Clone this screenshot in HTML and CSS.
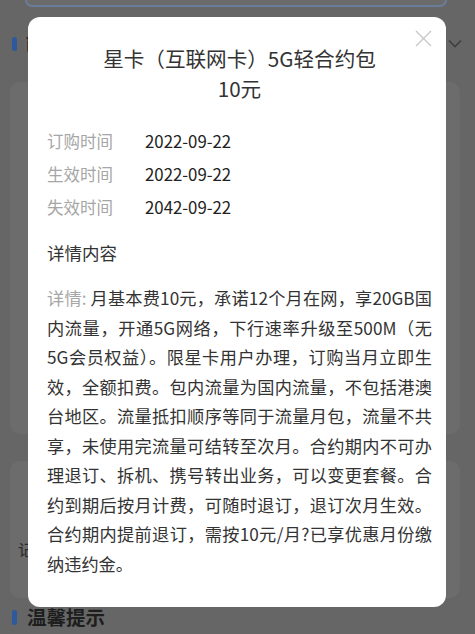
FILE: index.html
```html
<!DOCTYPE html>
<html lang="zh-CN">
<head>
<meta charset="utf-8">
<title>套餐详情</title>
<link rel="stylesheet" href="styles.css">
</head>
<body>
<div class="page">
  <div class="top-card"></div>
  <div class="sec-head">
    <span class="sec-bar"></span>
    <span class="sec-title">已订购套餐</span>
    <svg class="chev" width="14" height="9" viewBox="0 0 14 9"><path d="M1 1.5 L7 7.5 L13 1.5" fill="none" stroke="#3e3e3e" stroke-width="1.6"/></svg>
  </div>
  <div class="bg-card bg-card-a"></div>
  <div class="bg-card bg-card-b"><span class="bg-text">记录</span></div>
  <div class="sec-head sec-head-2">
    <span class="sec-bar"></span>
    <span class="sec-title-2">温馨提示</span>
  </div>
</div>

<div class="modal">
  <svg class="close" width="17" height="17" viewBox="0 0 17 17"><path d="M1 1 L16 16 M16 1 L1 16" stroke="#c8c8c8" stroke-width="1.4" fill="none"/></svg>
  <h2 class="title">星卡（互联网卡）5G轻合约包<br>10元</h2>
  <div class="info">
    <div class="row"><span class="lbl">订购时间</span><span class="val">2022-09-22</span></div>
    <div class="row"><span class="lbl">生效时间</span><span class="val">2022-09-22</span></div>
    <div class="row"><span class="lbl">失效时间</span><span class="val">2042-09-22</span></div>
  </div>
  <h3 class="sub">详情内容</h3>
  <p class="desc"><span class="desc-lbl">详情:</span> 月基本费10元，承诺12个月在网，享20GB国内流量，开通5G网络，下行速率升级至500M（无5G会员权益）。限星卡用户办理，订购当月立即生效，全额扣费。包内流量为国内流量，不包括港澳台地区。流量抵扣顺序等同于流量月包，流量不共享，未使用完流量可结转至次月。合约期内不可办理退订、拆机、携号转出业务，可以变更套餐。合约到期后按月计费，可随时退订，退订次月生效。合约期内提前退订，需按10元/月?已享优惠月份缴纳违约金。</p>
</div>
</body>
</html>
```

FILE: styles.css
```css
html, body {
  margin: 0;
  padding: 0;
}
body {
  background: #666666;
  font-family: "Noto Sans CJK SC", "Noto Sans", sans-serif;
  width: 475px;
  height: 634px;
  overflow: hidden;
}
.page {
  display: flex;
  flex-direction: column;
}
.top-card {
  height: 5px;
  margin: 0 28px 0 25px;
  background: #6b6b6b;
  border: 2px solid #6a7c98;
  border-top: none;
  border-radius: 0 0 12px 12px;
}
.sec-head {
  display: flex;
  align-items: center;
  height: 15px;
  margin-top: 29px;
  padding-left: 12px;
}
.sec-bar {
  width: 5px;
  height: 14px;
  border-radius: 3px;
  background: #2d5a9c;
}
.sec-title {
  margin-left: 8px;
  font-size: 18px;
  font-weight: 700;
  color: #222;
}
.chev {
  margin-left: auto;
  margin-right: 13px;
}
.bg-card {
  margin: 0 15px 0 10px;
  background: #6c6c6c;
  border-radius: 10px;
}
.bg-card-a {
  margin-top: 31px;
  height: 352px;
}
.bg-card-b {
  margin-top: 27px;
  height: 137px;
  display: flex;
  align-items: center;
  padding-left: 8px;
}
.bg-text {
  font-size: 16px;
  color: #2a2a2a;
  margin-top: 38px;
}
.sec-head-2 {
  margin-top: 7px;
  height: 24px;
}
.sec-head-2 .sec-bar {
  height: 15px;
}
.sec-title-2 {
  margin-left: 10px;
  font-size: 19.5px;
  font-weight: 700;
  color: #1e1e1e;
  line-height: 24px;
}

.modal {
  position: fixed;
  left: 28px;
  top: 17px;
  width: 418px;
  height: 590px;
  box-sizing: border-box;
  background: #ffffff;
  border-radius: 12px;
  padding: 26px 14px 0 19px;
}
.close {
  position: absolute;
  right: 14px;
  top: 13px;
}
.title {
  margin: 0;
  padding: 0 30px;
  text-align: center;
  font-size: 20.6px;
  line-height: 30px;
  font-weight: 400;
  color: #333;
}
.info {
  margin-top: 21px;
  display: flex;
  flex-direction: column;
}
.row {
  display: flex;
  align-items: center;
  height: 33px;
}
.lbl {
  width: 98px;
  font-size: 16.5px;
  color: #a6a6a6;
}
.val {
  font-size: 16.8px;
  color: #222;
}
.sub {
  margin: 15px 0 0;
  font-size: 17.5px;
  line-height: 30px;
  font-weight: 400;
  color: #333;
}
.desc {
  margin: 15px 0 0;
  width: 385px;
  font-size: 17.2px;
  line-height: 29.5px;
  color: #333;
  text-align: justify;
}
.desc-lbl {
  color: #a6a6a6;
}
```
